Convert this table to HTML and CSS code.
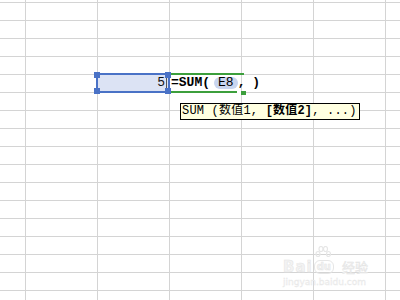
FILE: index.html
```html
<!DOCTYPE html>
<html>
<head>
<meta charset="utf-8">
<link rel="stylesheet" href="styles.css">
</head>
<body>
<div class="sheet">
  <div class="sel">
    <span class="val">5</span><span class="thin"></span>
    <i class="h tl"></i><i class="h tr"></i><i class="h bl"></i><i class="h br"></i>
  </div>
  <div class="edit">
    <span class="f">=SUM(</span><span class="ref">E8</span><span class="f">, </span><span class="caret"></span><span class="f">)</span>
    <i class="gh"></i>
  </div>
  <div class="tip">SUM (数值1, <b>[数值2]</b>, ...)</div>
  <div class="wm">
    <div class="wm-top">
      <span class="bai">Bai</span>
      <span class="du">du
        <svg class="paw" width="16" height="14" viewBox="0 0 16 14"><g fill="none" stroke="#e6e6e6" stroke-width="1.2"><ellipse cx="3" cy="8" rx="2" ry="2.5"/><ellipse cx="6" cy="3" rx="2" ry="2.5"/><ellipse cx="10.5" cy="3" rx="2" ry="2.5"/><ellipse cx="13.5" cy="8" rx="2" ry="2.5"/></g></svg>
      </span>
      <span class="jy">经验</span>
    </div>
    <div class="url">jingyan.baidu.com</div>
  </div>
</div>
</body>
</html>
```
FILE: styles.css
```css
html, body {
  margin: 0;
  padding: 0;
  background: #fff;
}
.sheet {
  position: relative;
  width: 400px;
  height: 300px;
  overflow: hidden;
  display: grid;
  grid-template-columns: 26px repeat(6, 72px);
  grid-template-rows: 3px repeat(17, 18px);
  background-color: #fff;
  background-image:
    linear-gradient(to right, transparent 71px, #d4d4d4 71px),
    linear-gradient(to bottom, transparent 17px, #d4d4d4 17px);
  background-size: 72px 100%, 100% 18px;
  background-position: -46px 0, 0 -15px;
  font-family: "Liberation Mono", "Noto Sans CJK SC", monospace;
}
.sel {
  grid-column: 3;
  grid-row: 6;
  margin: -2px 0 0 -2px;
  position: relative;
  box-sizing: border-box;
  border: 2px solid #4a72c6;
  background: #dce3f4;
  display: flex;
  align-items: center;
  justify-content: flex-end;
  padding-right: 1px;
  font-size: 13px;
  color: #111;
}
.val {
  line-height: 14px;
}
.thin {
  width: 1px;
  height: 12px;
  background: #555;
  margin-left: 1px;
}
.h {
  position: absolute;
  width: 6px;
  height: 6px;
  background: #4a72c6;
}
.tl { left: -4px; top: -3px; }
.tr { right: -3px; top: -3px; }
.bl { left: -4px; bottom: -3px; }
.br { right: -3px; bottom: -3px; }
.edit {
  grid-column: 4;
  grid-row: 6;
  margin: -2px -2px 0 1px;
  position: relative;
  box-sizing: border-box;
  border-top: 2px solid #3c9f3c;
  border-bottom: 2px solid #3c9f3c;
  display: flex;
  align-items: center;
  white-space: pre;
  font-size: 13px;
  color: #000;
}
.edit::after {
  content: "";
  position: absolute;
  right: 0;
  bottom: -2px;
  width: 7px;
  height: 2px;
  background: #fff;
}
.f {
  font-weight: bold;
  line-height: 14px;
}
.ref {
  margin-left: 4px;
  padding: 0 4px;
  background: #c8d5ef;
  border-radius: 6px;
  line-height: 12px;
  height: 12px;
  display: inline-flex;
  align-items: center;
}
.caret {
  width: 1px;
  height: 14px;
  background: #000;
  margin-left: -1px;
}
.gh {
  position: absolute;
  right: -2px;
  bottom: -4px;
  width: 5px;
  height: 4px;
  background: #3c9f3c;
  z-index: 1;
}
.tip {
  position: absolute;
  left: 180px;
  top: 103px;
  width: 180px;
  height: 17px;
  box-sizing: border-box;
  border: 1px solid #000;
  background: #ffffe1;
  font-size: 12px;
  line-height: 15px;
  padding-left: 1px;
  white-space: pre;
  letter-spacing: 0.2px;
  color: #000;
}
.tip b {
  font-weight: bold;
}
.wm {
  position: absolute;
  left: 283px;
  top: 247px;
  color: #f3f3f3;
  font-family: "DejaVu Sans", sans-serif;
  -webkit-text-stroke: 0.5px #e4e4e4;
}
.wm-top {
  display: flex;
  align-items: flex-end;
  height: 27px;
}
.bai {
  font-size: 15px;
  font-weight: bold;
  letter-spacing: 1px;
  line-height: 14px;
}
.du {
  position: relative;
  font-size: 10px;
  font-weight: bold;
  line-height: 12px;
  padding: 0 2px;
  border: 1px solid #e6e6e6;
  border-radius: 6px;
  margin-left: 1px;
}
.paw {
  position: absolute;
  left: 0;
  top: -15px;
}
.jy {
  font-family: "Noto Sans CJK SC", sans-serif;
  font-size: 13px;
  line-height: 14px;
  margin-left: 8px;
}
.url {
  font-size: 9px;
  line-height: 11px;
  margin-top: 3px;
  -webkit-text-stroke: 0.3px #e6e6e6;
}
```
